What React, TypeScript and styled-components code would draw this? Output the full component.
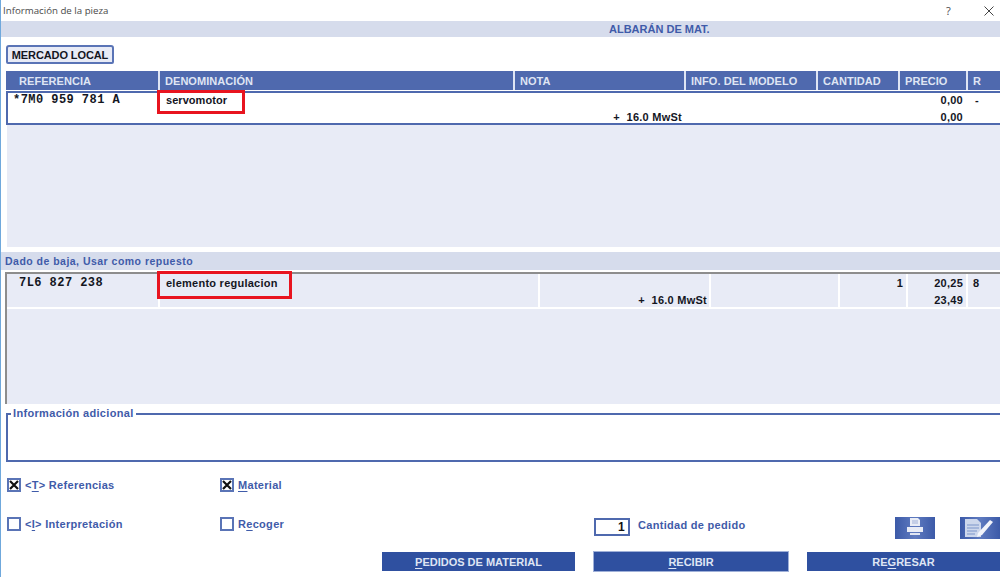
import React from "react";
import styled, { createGlobalStyle } from "styled-components";

const Global = createGlobalStyle`
  html, body { margin: 0; padding: 0; background: #fff; }
  * { box-sizing: border-box; }
`;

const FONT = `"Liberation Sans", Arial, sans-serif`;
const BLUE = "#3f5ba9";
const HEAD = "#4f69ae";
const PALE = "#e8ebf6";
const BAND = "#d6dcec";

const Win = styled.div`
  width: 1000px; height: 577px; overflow: hidden;
  border-left: 1px solid #6fa8dc;
  background: #fff;
  display: flex; flex-direction: column;
  font-family: ${FONT};
`;
const TitleBar = styled.div`
  height: 21px; flex: none; display: flex; align-items: center;
  padding: 0 0 0 2px; color: #4a4a4a;
  font: 9.7px "Open Sans", sans-serif;
`;
const TitleText = styled.span` flex: 1; `;
const Help = styled.span` width: 12px; font-size: 11px; margin-right: 26px; `;
const Close = styled.svg` width: 10px; height: 10px; margin-right: 6px; `;
const Band = styled.div<{ $h: number }>`
  height: ${p => p.$h}px; flex: none; background: ${BAND};
  color: ${BLUE}; font-size: 11px; font-weight: bold; display: flex; align-items: center;
`;
const BandCenter = styled.span` margin-left: 608px; `;
const BandLeft = styled.span` margin-left: 4px; letter-spacing: .48px; font-size: 10.5px; `;
const TabZone = styled.div`
  height: 34px; flex: none; padding: 8px 0 0 5px;
`;
const TabBtn = styled.div`
  width: 108px; height: 19px; background: #e8ebf6;
  border: 2px solid #5a74b6; border-radius: 3px 3px 2px 2px;
  font-size: 11px; font-weight: bold; color: #14161f; letter-spacing: -.1px;
  display: flex; align-items: center; justify-content: center; white-space: nowrap;
`;
const HeadRow = styled.div`
  height: 19px; margin-left: 5px; flex: none; display: flex; background: ${HEAD};
  color: #dfe5f4; font-size: 11px; font-weight: bold; letter-spacing: .05px;
`;
const HeadCell = styled.div<{ $w: number; $pad?: number; $last?: boolean }>`
  flex: none; width: ${p => p.$w}px; padding-left: ${p => p.$pad ?? 5}px;
  display: flex; align-items: center; white-space: nowrap;
  border-right: ${p => (p.$last ? "none" : "2px solid #dfe5f4")};
`;
const RowWhite = styled.div`
  height: 34px; flex: none; margin: 1px 0 0 5px;
  display: flex;
  border-top: 2px solid ${HEAD}; border-left: 2px solid ${HEAD}; border-bottom: 2px solid ${HEAD};
  background: #fff;
`;
const Area = styled.div<{ $h: number }>`
  height: ${p => p.$h}px; flex: none; margin-left: 6px; background: ${PALE};
`;
const Gap = styled.div<{ $h: number }>` height: ${p => p.$h}px; flex: none; `;
const Grey = styled.div`
  height: 132px; flex: none; margin: 2px 0 0 4px; background: ${PALE};
  border-top: 2px solid #8d8d8d; border-left: 2px solid #8d8d8d;
  display: flex; flex-direction: column;
`;
const RowGrey = styled.div`
  height: 35px; flex: none; display: flex; border-bottom: 2px solid #fff;
`;
const Cell = styled.div<{ $w: number; $sep?: boolean; $top?: number }>`
  flex: none; width: ${p => p.$w}px; height: 100%;
  border-right: ${p => (p.$sep ? "2px solid #fff" : "none")};
  display: flex; flex-direction: column; justify-content: flex-start;
  padding-top: ${p => p.$top ?? 2}px; color: #14161f; font-size: 11px; font-weight: bold;
`;
const Ref = styled.span<{ $pad: number }>`
  font: bold 12px "Liberation Mono", monospace; letter-spacing: .45px;
  padding-left: ${p => p.$pad}px; white-space: pre; line-height: 14px;
`;
const Boxed = styled.span<{ $w: number; $h: number; $mt: number; $lh: number; $ls: number }>`
  margin: ${p => p.$mt}px 0 0 -3px; width: ${p => p.$w}px; height: ${p => p.$h}px; flex: none;
  border: 3px solid #e8141f; padding: 0 0 0 6px; white-space: nowrap;
  line-height: ${p => p.$lh}px; letter-spacing: ${p => p.$ls}px; font-size: 11px;
`;
const Line = styled.span<{ $pr?: number; $right?: boolean; $pl?: number }>`
  flex: none; height: 17px; line-height: 14px; white-space: nowrap; letter-spacing: .25px;
  text-align: ${p => (p.$right ? "right" : "left")};
  padding-right: ${p => p.$pr ?? 0}px; padding-left: ${p => p.$pl ?? 0}px;
`;
const InfoBox = styled.fieldset`
  height: 54px; flex: none; margin: 4px -2px 0 5px; padding: 0; min-width: 0;
  border: 2px solid ${HEAD}; border-right: none;
`;
const Legend = styled.legend`
  margin-left: 3px; padding: 0 2px; font-size: 11px; font-weight: bold; line-height: 11px;
  color: ${BLUE}; letter-spacing: .33px;
`;
const Options = styled.div`
  height: 90px; flex: none; padding: 14px 0 0 6px;
  display: grid; grid-template-columns: 213px 374px 301px 65px 40px;
  grid-template-rows: 18px 18px; row-gap: 21px; align-items: center;
`;
const Check = styled.label`
  display: flex; align-items: center; gap: 4px; color: ${BLUE};
  font-size: 11px; font-weight: bold; letter-spacing: .3px; white-space: nowrap;
  & u { text-decoration-thickness: 1px; text-underline-offset: 2px; }
`;
const Box = styled.span`
  width: 14px; height: 14px; flex: none; border: 2px solid #5a74b6; background: #fff;
  display: flex; align-items: center; justify-content: center;
`;
const Qty = styled.div`
  display: flex; align-items: flex-start; gap: 8px; color: ${BLUE}; align-self: start;
  font-size: 11px; font-weight: bold; letter-spacing: .3px; white-space: nowrap;
`;
const QtyLabel = styled.span` line-height: 20px; `;
const QtyBox = styled.div`
  width: 36px; height: 18px; margin-top: 3px; border: 2px solid #4f69ae; color: #111; background: #fff;
  font-size: 12px; text-align: right; padding-right: 3px; line-height: 14px;
`;
const IconBtn = styled.div`
  width: 40px; height: 22px; align-self: start; margin-top: 2px;
  display: flex; align-items: center; justify-content: center;
  background: linear-gradient(90deg, #3c5aa8, #5f7bc0 50%, #3c5aa8);
`;
const ButtonRow = styled.div`
  height: 19px; flex: none; padding-left: 381px; display: flex; gap: 18px;
`;
const Btn = styled.div<{ $w: number; $edge?: boolean }>`
  width: ${p => p.$w}px; height: ${p => (p.$edge ? 21 : 19)}px;
  margin-top: ${p => (p.$edge ? -1 : 0)}px;
  background: #2f50a0; border: ${p => (p.$edge ? "1px solid #9fb0d8" : "none")};
  color: #dfe5f4; font-size: 11px; font-weight: bold;
  display: flex; align-items: center; justify-content: center;
  & u { text-underline-offset: 2px; }
`;

const X = () => (
  <svg width="10" height="10" viewBox="0 0 10 10">
    <path d="M1 1 L9 9 M9 1 L1 9" stroke="#111" strokeWidth="2.2" />
  </svg>
);

const cols1: [string, number, number?][] = [
  ["REFERENCIA", 154, 13],
  ["DENOMINACIÓN", 355],
  ["NOTA", 171],
  ["INFO. DEL MODELO", 132],
  ["CANTIDAD", 82],
  ["PRECIO", 68],
];

export default function App() {
  return (
    <Win>
      <Global />
      <TitleBar>
        <TitleText>Información de la pieza</TitleText>
        <Help>?</Help>
        <Close viewBox="0 0 10 10"><path d="M.5 .5 L9.5 9.5 M9.5 .5 L.5 9.5" stroke="#444" strokeWidth="1" /></Close>
      </TitleBar>
      <Band $h={16}><BandCenter>ALBARÁN DE MAT.</BandCenter></Band>
      <TabZone><TabBtn>MERCADO LOCAL</TabBtn></TabZone>
      <HeadRow>
        {cols1.map(([t, w, p]) => <HeadCell key={t} $w={w} $pad={p}>{t}</HeadCell>)}
        <HeadCell $w={33} $last>R</HeadCell>
      </HeadRow>
      <RowWhite>
        <Cell $w={152} $top={0}><Ref $pad={5}>*7M0 959 781 A</Ref></Cell>
        <Cell $w={352} $top={0}>
          <Boxed $w={88} $h={24} $mt={-3} $lh={14} $ls={0.05}>servomotor</Boxed>
        </Cell>
        <Cell $w={172} $top={0}>
          <Line />
          <Line $right $pr={2}>+&nbsp;&nbsp;16.0 MwSt</Line>
        </Cell>
        <Cell $w={281} $top={0}>
          <Line $right $pr={2}>0,00</Line>
          <Line $right $pr={2}>0,00</Line>
        </Cell>
        <Cell $w={30} $top={0}><Line $pl={10}>-</Line></Cell>
      </RowWhite>
      <Area $h={122} />
      <Gap $h={5} />
      <Band $h={18}><BandLeft>Dado de baja, Usar como repuesto</BandLeft></Band>
      <Grey>
        <RowGrey>
          <Cell $w={153} $sep><Ref $pad={12}>7L6 827 238</Ref></Cell>
          <Cell $w={380} $sep><Boxed $w={135} $h={28} $mt={-5} $lh={18} $ls={0.25}>elemento regulacion</Boxed></Cell>
          <Cell $w={171} $sep>
            <Line />
            <Line $right $pr={2}>+&nbsp;&nbsp;16.0 MwSt</Line>
          </Cell>
          <Cell $w={129} $sep />
          <Cell $w={68} $sep><Line $right $pr={3}>1</Line></Cell>
          <Cell $w={60} $sep>
            <Line $right $pr={3}>20,25</Line>
            <Line $right $pr={3}>23,49</Line>
          </Cell>
          <Cell $w={30}><Line $pl={5}>8</Line></Cell>
        </RowGrey>
      </Grey>
      <InfoBox><Legend>Información adicional</Legend></InfoBox>
      <Options>
        <Check><Box><X /></Box><span>&lt;<u>T</u>&gt; Referencias</span></Check>
        <Check><Box><X /></Box><span><u>M</u>aterial</span></Check>
        <span /><span /><span />
        <Check><Box /><span>&lt;<u>I</u>&gt; Interpretación</span></Check>
        <Check><Box /><span>R<u>e</u>coger</span></Check>
        <Qty><QtyBox>1</QtyBox><QtyLabel>Cantidad de pedido</QtyLabel></Qty>
        <IconBtn>
          <svg width="40" height="22" viewBox="0 0 40 22">
            <path d="M15 1 H23 L25 3 V9 H15 Z" fill="#e8ecf6" />
            <path d="M17 4 H23 M17 6 H23" stroke="#9fb0d8" strokeWidth="1" />
            <path d="M12 10 H28 V15 H12 Z" fill="#e8ecf6" />
            <path d="M15 16 H25 V18 H15 Z" fill="#dfe5f3" />
          </svg>
        </IconBtn>
        <IconBtn>
          <svg width="40" height="22" viewBox="0 0 40 22">
            <path d="M5 2 H17 L21 6 V20 H5 Z" fill="#cdd7ec" />
            <path d="M7 8 H19 M7 11 H19 M7 14 H17 M7 17 H15" stroke="#7d95ca" strokeWidth="1.2" />
            <path d="M18 16 L30 3 L33 5 L22 18 L17 20 Z" fill="#f3f5fb" />
          </svg>
        </IconBtn>
      </Options>
      <ButtonRow>
        <Btn $w={193}><span><u>P</u>EDIDOS DE MATERIAL</span></Btn>
        <Btn $w={196} $edge><span><u>R</u>ECIBIR</span></Btn>
        <Btn $w={193}><span>RE<u>G</u>RESAR</span></Btn>
      </ButtonRow>
    </Win>
  );
}
